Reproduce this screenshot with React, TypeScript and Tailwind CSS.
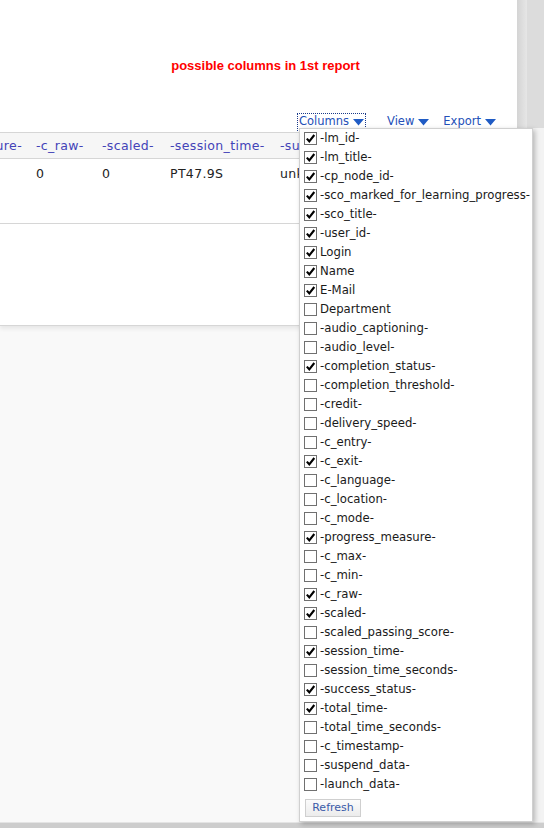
import React from "react";

const items: [string, boolean][] = [
  ["-lm_id-", true],
  ["-lm_title-", true],
  ["-cp_node_id-", true],
  ["-sco_marked_for_learning_progress-", true],
  ["-sco_title-", true],
  ["-user_id-", true],
  ["Login", true],
  ["Name", true],
  ["E-Mail", true],
  ["Department", false],
  ["-audio_captioning-", false],
  ["-audio_level-", false],
  ["-completion_status-", true],
  ["-completion_threshold-", false],
  ["-credit-", false],
  ["-delivery_speed-", false],
  ["-c_entry-", false],
  ["-c_exit-", true],
  ["-c_language-", false],
  ["-c_location-", false],
  ["-c_mode-", false],
  ["-progress_measure-", true],
  ["-c_max-", false],
  ["-c_min-", false],
  ["-c_raw-", true],
  ["-scaled-", true],
  ["-scaled_passing_score-", false],
  ["-session_time-", true],
  ["-session_time_seconds-", false],
  ["-success_status-", true],
  ["-total_time-", true],
  ["-total_time_seconds-", false],
  ["-c_timestamp-", false],
  ["-suspend_data-", false],
  ["-launch_data-", false],
];

function Caret() {
  return (
    <svg width="11" height="7" viewBox="0 0 11 7" className="ml-[4px] mt-[1px]">
      <path d="M0 0 H11 L5.5 6.5 Z" fill="#1f5bc4" />
    </svg>
  );
}

function Box({ checked }: { checked: boolean }) {
  return (
    <span className="flex h-[13px] w-[13px] shrink-0 items-center justify-center border border-[#707070] bg-white">
      {checked && (
        <svg width="11" height="11" viewBox="0 0 11 11">
          <path d="M1.8 5.6 L4.3 8.3 L9.3 2" stroke="#000" strokeWidth="2.1" fill="none" />
        </svg>
      )}
    </span>
  );
}

export default function App() {
  const font = { fontFamily: '"DejaVu Sans", Verdana, sans-serif' };
  return (
    <div
      className="relative flex h-[828px] w-[544px] flex-col overflow-hidden bg-[#f9f9f9]"
      style={font}
    >
      <div className="flex flex-1">
        {/* main column */}
        <div className="flex w-[517px] flex-col">
          <div className="h-[326px] overflow-hidden border-b border-[#d6d6d6] bg-white shadow-[0_3px_4px_rgba(0,0,0,0.07)]">
            <div
              className="pl-[14px] pt-[58px] text-center text-[13px] font-bold leading-[16px] text-[#ff0000]"
              style={{ fontFamily: '"Liberation Sans", Arial, sans-serif' }}
            >
              possible columns in 1st report
            </div>
            <div className="mt-[39px] flex h-[18px] items-center text-[11.5px] text-[#2450b8]">
              <div className="ml-[297px] flex h-[18px] items-center border border-dotted border-[#1a3a8a] px-[1px]">
                <span>Columns</span>
                <Caret />
              </div>
              <div className="ml-[21px] flex items-center">
                <span>View</span>
                <Caret />
              </div>
              <div className="ml-[14px] flex items-center">
                <span>Export</span>
                <Caret />
              </div>
            </div>
            {/* table */}
            <div className="mt-[1px] h-[92px] whitespace-nowrap border-b border-[#d6d6d6] text-[12.5px] tracking-[0.35px]">
              <div className="flex h-[27px] items-center border-y border-[#d6d6d6] bg-[#f6f6f6] pt-[1px] text-[#4343b8]">
                <div className="flex w-[36px] justify-end overflow-hidden pr-[14px]">
                  <span>-progress_measure-</span>
                </div>
                <div className="w-[66px]">-c_raw-</div>
                <div className="w-[68px]">-scaled-</div>
                <div className="w-[110px]">-session_time-</div>
                <div>-success_status-</div>
              </div>
              <div className="flex h-[30px] items-center text-[#222]">
                <div className="w-[36px]" />
                <div className="w-[66px]">0</div>
                <div className="w-[68px]">0</div>
                <div className="w-[110px]">PT47.9S</div>
                <div>unknown</div>
              </div>
            </div>
          </div>
          <div className="flex-1" />
        </div>
        {/* right strip */}
        <div className="flex flex-1 flex-col">
          <div className="flex h-[128px]">
            <div className="w-[10px] bg-gradient-to-r from-[#d4d4d4] to-[#e6e6e6]" />
            <div className="flex-1 bg-[#dcdcdc]" />
          </div>
          <div className="flex-1 bg-[#f3f3f3]" />
        </div>
      </div>
      <div className="h-[1px] bg-[#e4e4e4]" />
      <div className="h-[5px] bg-[#cdcdcd]" />

      {/* dropdown */}
      <div className="absolute left-[299px] top-[128px] flex h-[694px] w-[234px] flex-col border border-[#d0d0d0] bg-white pl-[4px] text-[11.7px] text-[#1a1a1a] shadow-[2px_2px_5px_rgba(0,0,0,0.25)]">
        {items.map(([label, checked]) => (
          <div key={label} className="flex h-[19px] items-center whitespace-nowrap">
            <Box checked={checked} />
            <span className="ml-[3px]">{label}</span>
          </div>
        ))}
        <button className="ml-[1px] mt-[5px] h-[18px] w-[56px] border border-[#cfcfcf] bg-gradient-to-b from-[#fbfbfb] to-[#ececec] text-[11px] leading-[16px] text-[#3a5aa8]">
          Refresh
        </button>
      </div>
    </div>
  );
}
